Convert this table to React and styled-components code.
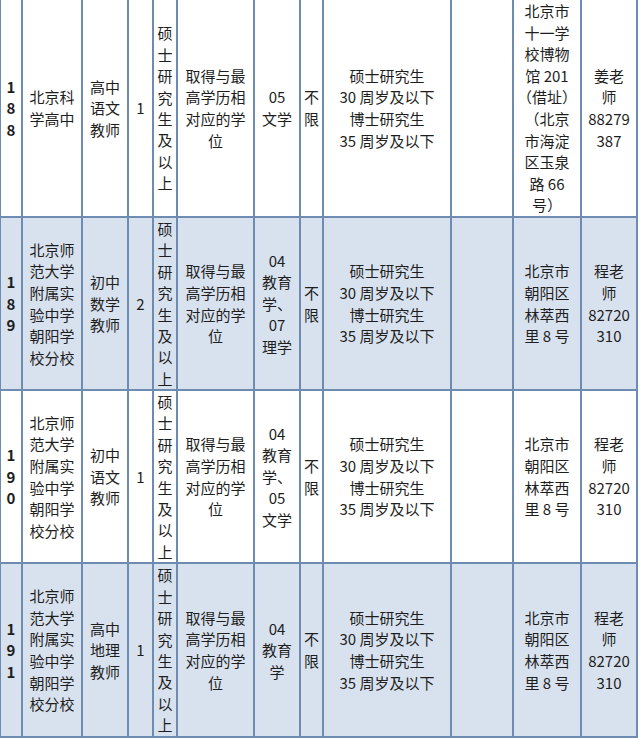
import React from "react";
import styled, { createGlobalStyle } from "styled-components";

const rows = [
  {
    no: "1\n8\n8",
    school: "北京科\n学高中",
    post: "高中\n语文\n教师",
    count: "1",
    major: "05\n文学",
    address: "北京市\n十一学\n校博物\n馆 201\n（借址）\n（北京\n市海淀\n区玉泉\n路 66\n号）",
    contact: "姜老\n师\n88279\n387",
    shaded: false,
  },
  {
    no: "1\n8\n9",
    school: "北京师\n范大学\n附属实\n验中学\n朝阳学\n校分校",
    post: "初中\n数学\n教师",
    count: "2",
    major: "04\n教育\n学、\n07\n理学",
    address: "北京市\n朝阳区\n林萃西\n里 8 号",
    contact: "程老\n师\n82720\n310",
    shaded: true,
  },
  {
    no: "1\n9\n0",
    school: "北京师\n范大学\n附属实\n验中学\n朝阳学\n校分校",
    post: "初中\n语文\n教师",
    count: "1",
    major: "04\n教育\n学、\n05\n文学",
    address: "北京市\n朝阳区\n林萃西\n里 8 号",
    contact: "程老\n师\n82720\n310",
    shaded: false,
  },
  {
    no: "1\n9\n1",
    school: "北京师\n范大学\n附属实\n验中学\n朝阳学\n校分校",
    post: "高中\n地理\n教师",
    count: "1",
    major: "04\n教育\n学",
    address: "北京市\n朝阳区\n林萃西\n里 8 号",
    contact: "程老\n师\n82720\n310",
    shaded: true,
  },
];

const degree = "硕\n士\n研\n究\n生\n及\n以\n上";
const diploma = "取得与最\n高学历相\n对应的学\n位";
const age = "硕士研究生\n30 周岁及以下\n博士研究生\n35 周岁及以下";

const App = () => {
  return (
    <>
      <GlobalStyle />
      <Sheet>
        {rows.map((row) => (
          <React.Fragment key={row.no}>
            <Cell $shaded={row.shaded} $bold>
              {row.no}
            </Cell>
            <Cell $shaded={row.shaded}>{row.school}</Cell>
            <Cell $shaded={row.shaded}>{row.post}</Cell>
            <Cell $shaded={row.shaded}>{row.count}</Cell>
            <Cell $shaded={row.shaded} $tight>
              {degree}
            </Cell>
            <Cell $shaded={row.shaded}>{diploma}</Cell>
            <Cell $shaded={row.shaded}>{row.major}</Cell>
            <Cell $shaded={row.shaded}>{"不\n限"}</Cell>
            <Cell $shaded={row.shaded}>{age}</Cell>
            <Cell $shaded={row.shaded} />
            <Cell $shaded={row.shaded}>{row.address}</Cell>
            <Cell $shaded={row.shaded}>{row.contact}</Cell>
          </React.Fragment>
        ))}
      </Sheet>
    </>
  );
};

const GlobalStyle = createGlobalStyle`
  html, body {
    margin: 0;
    padding: 0;
    background: #ffffff;
  }
  body {
    font-family: "Noto Sans CJK SC", "Noto Sans", sans-serif;
  }
`;

const Sheet = styled.div`
  display: grid;
  width: 638px;
  box-sizing: border-box;
  grid-template-columns: 20px 58px 44px 23px 22px 75px 44px 21px 126px 60px 66px 54px;
  grid-template-rows: 216px 171px 171px 172px;
  gap: 2px;
  padding: 0 2px 2px 1px;
  background: #6e8cb2;
`;

const Cell = styled.div`
  display: flex;
  align-items: center;
  justify-content: center;
  text-align: center;
  white-space: pre-line;
  overflow: visible;
  background: ${(p) => (p.$shaded ? "#d8e2ef" : "#ffffff")};
  color: #1e1e1e;
  font-size: 15px;
  line-height: ${(p) => (p.$tight ? "21.4px" : "21.6px")};
  font-weight: ${(p) => (p.$bold ? 700 : 400)};
  letter-spacing: 0;
  text-spacing-trim: space-all;
  font-feature-settings: "halt" 0, "chws" 0, "palt" 0;
`;

export default App;
